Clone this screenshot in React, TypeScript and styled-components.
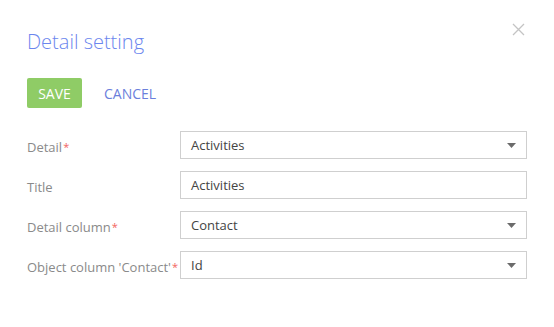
import React from "react"
import styled, { createGlobalStyle } from "styled-components"

const GlobalStyle = createGlobalStyle`
  body {
    margin: 0;
    background: #fff;
    font-family: "Open Sans", "Liberation Sans", sans-serif;
  }
`

const Dialog = styled.div`
  position: relative;
  width: 554px;
  height: 327px;
  box-sizing: border-box;
  padding: 26px 27px 0 27px;
`

const Title = styled.h1`
  margin: 0;
  font-size: 20px;
  font-weight: 300;
  line-height: 32px;
  color: #6b86ee;
`

const CloseButton = styled.button`
  position: absolute;
  top: 23px;
  right: 29px;
  width: 13px;
  height: 13px;
  padding: 0;
  border: 0;
  background: none;
  cursor: pointer;
  display: flex;
`

const Toolbar = styled.div`
  display: flex;
  align-items: center;
  gap: 22px;
  margin-top: 20px;
`

const SaveButton = styled.button`
  height: 30px;
  width: 55px;
  border: 0;
  border-radius: 2px;
  background: #8fcc66;
  color: #fff;
  font-family: inherit;
  font-size: 14px;
  padding: 0;
`

const CancelButton = styled.button`
  border: 0;
  background: none;
  padding: 0;
  color: #6b7fdc;
  font-family: inherit;
  font-size: 14px;
`

const Form = styled.div`
  display: grid;
  grid-template-columns: 153px 347px;
  row-gap: 12px;
  margin-top: 23px;
`

const Label = styled.label`
  display: flex;
  align-items: center;
  padding-top: 3px;
  font-size: 13px;
  color: #8a8a8a;
  white-space: nowrap;
`

const Star = styled.span`
  color: #f2645f;
  font-size: 11px;
  margin-left: 1px;
`

const Field = styled.div`
  height: 28px;
  box-sizing: border-box;
  border: 1px solid #cfcfcf;
  display: flex;
  align-items: center;
  padding: 0 10px;
  font-size: 13px;
  color: #444;
`

const Value = styled.span`
  flex: 1;
`

function Arrow() {
  return (
    <svg width="9" height="5" viewBox="0 0 9 5">
      <path d="M0 0h9L4.5 5z" fill="#6b6b6b" />
    </svg>
  )
}

interface RowProps {
  label: string
  value: string
  required?: boolean
  select?: boolean
}

function Row({ label, value, required, select }: RowProps) {
  return (
    <>
      <Label>
        {label}
        {required ? <Star>*</Star> : null}
      </Label>
      <Field>
        <Value>{value}</Value>
        {select ? <Arrow /> : null}
      </Field>
    </>
  )
}

export default function App() {
  return (
    <>
      <GlobalStyle />
      <Dialog>
        <Title>Detail setting</Title>
        <CloseButton>
          <svg width="13" height="13" viewBox="0 0 13 13">
            <path d="M1 1l11 11M12 1L1 12" stroke="#c4c4c4" strokeWidth="1.3" />
          </svg>
        </CloseButton>
        <Toolbar>
          <SaveButton>SAVE</SaveButton>
          <CancelButton>CANCEL</CancelButton>
        </Toolbar>
        <Form>
          <Row label="Detail" value="Activities" required select />
          <Row label="Title" value="Activities" />
          <Row label="Detail column" value="Contact" required select />
          <Row label="Object column 'Contact'" value="Id" required select />
        </Form>
      </Dialog>
    </>
  )
}
